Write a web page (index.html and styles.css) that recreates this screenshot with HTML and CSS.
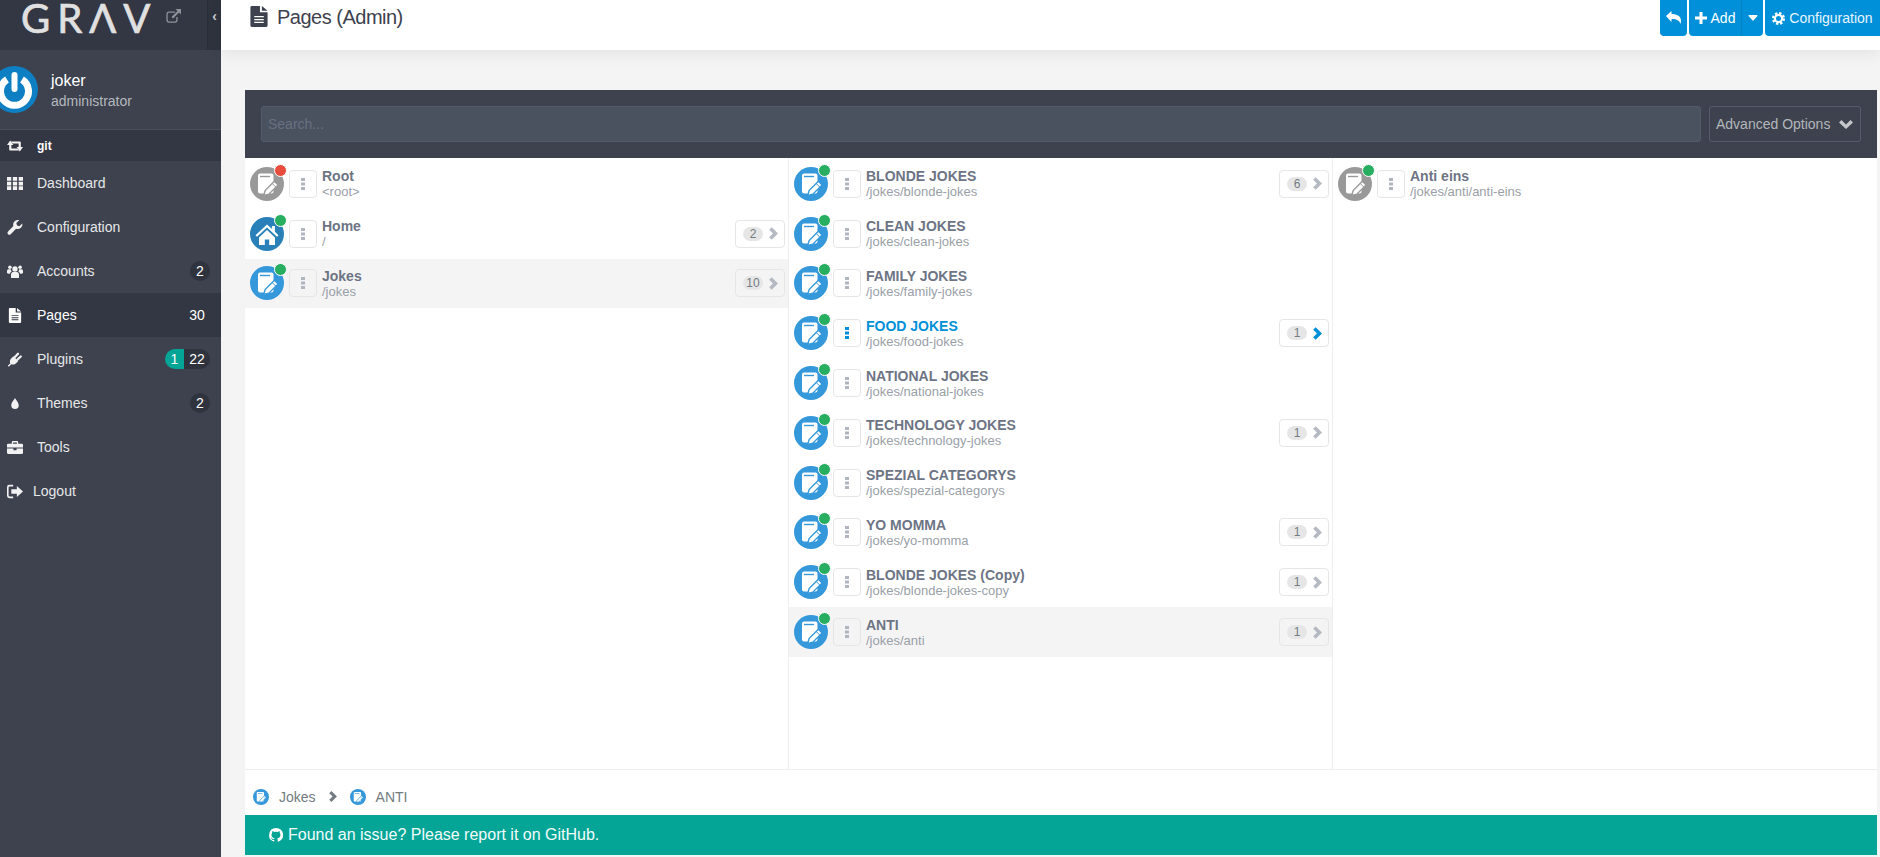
FILE: index.html
```html
<!DOCTYPE html>
<html lang="en">
<head>
<meta charset="utf-8">
<title>Pages (Admin)</title>
<link rel="stylesheet" href="styles.css">
</head>
<body>
<svg class="sprite" aria-hidden="true">
  <symbol id="note" viewBox="0 0 34 34">
    <rect x="8" y="6.500" width="15.500" height="20" rx="2" fill="#fff"/>
    <path d="M10 9.500h10" stroke="currentColor" stroke-width="1.400" fill="none"/>
    <path d="M13.800 28.400l1.300-4.800 9.300-9.300 3.700 3.700-9.300 9.200z" fill="#fff" stroke="currentColor" stroke-width="1.400"/>
    <path d="M22.300 16.600l3.600 3.600" stroke="currentColor" stroke-width="1" fill="none"/>
  </symbol>
  <symbol id="house" viewBox="0 0 34 34">
    <path d="M17 7.500L5.500 18.200l1.500 1.500 10-9.200 10 9.200 1.500-1.500-3.600-3.400V9h-3v3z" fill="#fff"/>
    <path d="M9 20.500L17 13l8 7.500V28h-5.800v-5.500h-4.400V28H9z" fill="#fff"/>
  </symbol>
  <symbol id="dots" viewBox="0 0 4 12">
    <rect width="4" height="3"/><rect y="4.500" width="4" height="3"/><rect y="9" width="4" height="3"/>
  </symbol>
  <symbol id="chev" viewBox="0 0 10 14">
    <path d="M3 0l7 7-7 7-2.800-2.800L4.400 7 .2 2.800z"/>
  </symbol>
  <symbol id="filetext" viewBox="0 0 18 22">
    <path d="M0 1.500A1.500 1.500 0 0 1 1.500 0H10v6.500h8v14a1.500 1.500 0 0 1-1.500 1.500h-15A1.500 1.500 0 0 1 0 20.500z"/>
    <path d="M12 0l6 5h-6z"/>
    <path d="M4 10.500h10v1.400H4zm0 3h10v1.400H4zm0 3h10v1.400H4z" fill="#fff"/>
  </symbol>
  <symbol id="filetext2" viewBox="0 0 18 22">
    <path d="M0 1.500A1.500 1.500 0 0 1 1.500 0H10v6.500h8v14a1.500 1.500 0 0 1-1.500 1.500h-15A1.500 1.500 0 0 1 0 20.500z" fill="#fff"/>
    <path d="M12 0l6 5h-6z" fill="#fff"/>
    <path d="M4 10.500h10v1.400H4zm0 3h10v1.400H4zm0 3h10v1.400H4z" fill="#333743"/>
  </symbol>
  <symbol id="retweet" viewBox="0 0 16 12">
    <path d="M0 5L3.200 .5 6.400 5H4.400v3.500h6l1.800 2H3.200a1 1 0 0 1-1-1V5z"/>
    <path d="M16 7L12.800 11.500 9.600 7h2V3.500h-6l-1.800-2h9a1 1 0 0 1 1 1V7z"/>
  </symbol>
  <symbol id="grid" viewBox="0 0 15 12">
    <path d="M0 0h4v3.500H0zm5.500 0h4v3.500h-4zm5.500 0h4v3.500h-4zM0 4.300h4v3.500H0zm5.500 0h4v3.500h-4zm5.500 0h4v3.500h-4zM0 8.500h4V12H0zm5.500 0h4V12h-4zm5.500 0h4V12h-4z"/>
  </symbol>
  <symbol id="wrench" viewBox="0 0 14 14">
    <path d="M13.800 3.200l-2.700 2.600-2.200-.7-.7-2.200L10.900.2C9.300-.3 7.500.1 6.400 1.300 5.200 2.500 5 4.200 5.500 5.700L.5 10.700c-.7.700-.7 1.800 0 2.500s1.800.7 2.500 0l5-5c1.600.6 3.300.3 4.500-.9 1.200-1.200 1.600-2.900 1.300-4.100z"/>
  </symbol>
  <symbol id="users" viewBox="0 0 16 13">
    <circle cx="8" cy="4" r="2.700"/><circle cx="2.900" cy="2.300" r="1.800"/><circle cx="13.100" cy="2.300" r="1.800"/>
    <path d="M4 12.500V9.500C4 8 5 7 6 7h4c1 0 2 1 2 2.500v3a.5.5 0 0 1-.5.5h-7a.5.5 0 0 1-.5-.5z"/>
    <path d="M0 8V6c0-1 .7-1.700 1.500-1.700h2.300c0 1 .4 1.700 1 2.300C3.800 7 3.200 7.700 3 8.800 1.500 8.800 0 8.500 0 8zM16 8V6c0-1-.7-1.700-1.500-1.700h-2.300c0 1-.4 1.700-1 2.300 1 .4 1.600 1.100 1.800 2.200 1.500 0 3-.3 3-.8z"/>
  </symbol>
  <symbol id="plug" viewBox="0 0 15 15">
    <path d="M.3 13.700L2.800 11.200C2 9.500 2.400 7.700 3.700 6.400L5.900 4.200 10.800 9.100 8.600 11.300C7.300 12.600 5.300 13 3.800 12.200L1.300 14.700z"/>
    <path d="M7.500 5L10.500 1.800M10 7.500L13.300 4.500" stroke="currentColor" stroke-width="2.300" stroke-linecap="round" fill="none"/>
  </symbol>
  <symbol id="drop" viewBox="-2.500 -2 15 18">
    <path d="M5 0c.4 2 4.500 5.500 4.500 9A4.500 4.500 0 0 1 .5 9C.5 5.500 4.600 2 5 0z"/>
  </symbol>
  <symbol id="case" viewBox="0 0 15 12">
    <path d="M4.500 2.500V1a1 1 0 0 1 1-1h4a1 1 0 0 1 1 1v1.500H14a1 1 0 0 1 1 1V6H0V3.500a1 1 0 0 1 1-1zM5.700 2.500h3.600V1.200H5.700z"/>
    <path d="M0 7h6v1.500h3V7h6v4a1 1 0 0 1-1 1H1a1 1 0 0 1-1-1z"/>
  </symbol>
  <symbol id="signout" viewBox="0 0 13 11">
    <path d="M5 0v1.500H2a.8.8 0 0 0-.7.7v6.600c0 .4.3.7.7.7h3V11H2a2 2 0 0 1-2-2V2a2 2 0 0 1 2-2z"/>
    <path d="M8 1l5 4.500L8 10V7.300H3.500V3.700H8z"/>
  </symbol>
  <symbol id="extlink" viewBox="0 0 15 14">
    <path d="M3 2.500h6v1.300H3a1.300 1.300 0 0 0-1.300 1.300v6A1.300 1.300 0 0 0 3 12.400h6a1.300 1.300 0 0 0 1.300-1.300V8h1.300v3.100A2.600 2.600 0 0 1 9 13.700H3a2.600 2.600 0 0 1-2.600-2.600v-6A2.600 2.600 0 0 1 3 2.500z"/>
    <path d="M9.500 0H15v5.500l-2-2-6 6-1.500-1.500 6-6z"/>
  </symbol>
  <symbol id="reply" viewBox="0 0 15 13">
    <path d="M0 5L5.500 0v3C11 3 15 5 15 10c0 1-.2 2-.6 3-.6-3-3-5-8.900-5v3z"/>
  </symbol>
  <symbol id="plus" viewBox="0 0 12 12">
    <path d="M4.500 0h3v4.500H12v3H7.500V12h-3V7.500H0v-3h4.500z"/>
  </symbol>
  <symbol id="caret" viewBox="0 0 10 6">
    <path d="M1 0h8a.6.6 0 0 1 .4 1L5.400 5.500a.6.6 0 0 1-.8 0L.6 1A.6.6 0 0 1 1 0z"/>
  </symbol>
  <symbol id="cog" viewBox="0 0 14 14">
    <circle cx="7" cy="7" r="3.900" fill="none" stroke="currentColor" stroke-width="2.400"/>
    <circle cx="7" cy="7" r="5.800" fill="none" stroke="currentColor" stroke-width="2.400" stroke-dasharray="2.550 2.000"/>
  </symbol>
  <symbol id="chevdown" viewBox="0 0 14 10">
    <path d="M0 3.500L2.500 1 7 5.500 11.500 1 14 3.500 7 10z"/>
  </symbol>
  <symbol id="github" viewBox="0 0 14 14">
    <path d="M7 0a7 7 0 0 0-2.200 13.600c.3.100.5-.1.500-.3v-1.300c-1.900.4-2.300-.8-2.300-.8-.3-.8-.8-1-.8-1-.6-.4 0-.4 0-.4.700 0 1 .7 1 .7.600 1 1.600.7 2 .6 0-.4.200-.7.400-.9-1.500-.2-3.100-.8-3.100-3.400 0-.7.300-1.300.7-1.800-.1-.2-.3-.9.100-1.800 0 0 .6-.2 1.900.7a6.500 6.500 0 0 1 3.500 0c1.300-.9 1.900-.7 1.900-.7.400.9.100 1.600.1 1.800.4.500.7 1.100.7 1.800 0 2.700-1.600 3.200-3.200 3.400.3.200.5.600.5 1.300v1.900c0 .2.100.4.500.3A7 7 0 0 0 7 0z"/>
  </symbol>
</svg>

<aside class="sidebar">
  <div class="brand">
    <span class="logo">GRΛV</span>
    <svg class="ext"><use href="#extlink"/></svg>
    <span class="collapse">‹</span>
  </div>
  <div class="user">
    <svg class="avatar" viewBox="0 0 47 47">
      <circle cx="23.500" cy="23.500" r="23.500" fill="#0e7fc2"/>
      <path d="M16 13.500a14 14 0 1 0 15 0" fill="none" stroke="#fff" stroke-width="7"/>
      <path d="M23.500 9v14" stroke="#fff" stroke-width="6" stroke-linecap="round"/>
    </svg>
    <div class="user-text">
      <div class="user-name">joker</div>
      <div class="user-role">administrator</div>
    </div>
  </div>
  <div class="git"><svg class="nav-icon"><use href="#retweet"/></svg><span>git</span></div>
  <nav class="nav">
    <a class="nav-item"><svg class="nav-icon"><use href="#grid"/></svg><span>Dashboard</span></a>
    <a class="nav-item"><svg class="nav-icon"><use href="#wrench"/></svg><span>Configuration</span></a>
    <a class="nav-item"><svg class="nav-icon"><use href="#users"/></svg><span>Accounts</span><b class="badge">2</b></a>
    <a class="nav-item active"><svg class="nav-icon"><use href="#filetext2"/></svg><span>Pages</span><b class="badge">30</b></a>
    <a class="nav-item"><svg class="nav-icon plug"><use href="#plug"/></svg><span>Plugins</span><b class="badge split"><i class="teal">1</i><i class="rest">22</i></b></a>
    <a class="nav-item"><svg class="nav-icon"><use href="#drop"/></svg><span>Themes</span><b class="badge">2</b></a>
    <a class="nav-item"><svg class="nav-icon"><use href="#case"/></svg><span>Tools</span></a>
    <a class="nav-item logout"><svg class="nav-icon"><use href="#signout"/></svg><span>Logout</span></a>
  </nav>
</aside>

<main class="main">
  <header class="topbar">
    <h1 class="title"><svg class="title-icon"><use href="#filetext"/></svg>Pages (Admin)</h1>
    <div class="actions">
      <a class="btn btn-back"><svg class="i-reply"><use href="#reply"/></svg></a>
      <div class="btn-group">
        <a class="btn btn-add"><svg class="i-plus"><use href="#plus"/></svg>Add</a>
        <a class="btn btn-caret"><svg class="i-caret"><use href="#caret"/></svg></a>
      </div>
      <a class="btn btn-config"><svg class="i-cog"><use href="#cog"/></svg>Configuration</a>
    </div>
  </header>
  <section class="content">
    <div class="panel">
      <div class="filters">
        <input class="search" type="text" placeholder="Search...">
        <div class="advanced">Advanced Options<svg class="i-chevdown"><use href="#chevdown"/></svg></div>
      </div>
      <div class="columns">
        <div class="col">
          <div class="row"><span class="pic gray"><svg><use href="#note"/></svg><i class="dot red"></i></span><span class="kebab"><svg><use href="#dots"/></svg></span><div class="info"><div class="name cap">Root</div><div class="path">&lt;root&gt;</div></div></div>
          <div class="row"><span class="pic dark"><svg><use href="#house"/></svg><i class="dot"></i></span><span class="kebab"><svg><use href="#dots"/></svg></span><div class="info"><div class="name cap">Home</div><div class="path">/</div></div><span class="count"><em>2</em><svg><use href="#chev"/></svg></span></div>
          <div class="row selected"><span class="pic"><svg><use href="#note"/></svg><i class="dot"></i></span><span class="kebab"><svg><use href="#dots"/></svg></span><div class="info"><div class="name cap">Jokes</div><div class="path">/jokes</div></div><span class="count"><em>10</em><svg><use href="#chev"/></svg></span></div>
        </div>
        <div class="col">
          <div class="row"><span class="pic"><svg><use href="#note"/></svg><i class="dot"></i></span><span class="kebab"><svg><use href="#dots"/></svg></span><div class="info"><div class="name">BLONDE JOKES</div><div class="path">/jokes/blonde-jokes</div></div><span class="count"><em>6</em><svg><use href="#chev"/></svg></span></div>
          <div class="row"><span class="pic"><svg><use href="#note"/></svg><i class="dot"></i></span><span class="kebab"><svg><use href="#dots"/></svg></span><div class="info"><div class="name">CLEAN JOKES</div><div class="path">/jokes/clean-jokes</div></div></div>
          <div class="row"><span class="pic"><svg><use href="#note"/></svg><i class="dot"></i></span><span class="kebab"><svg><use href="#dots"/></svg></span><div class="info"><div class="name">FAMILY JOKES</div><div class="path">/jokes/family-jokes</div></div></div>
          <div class="row hover"><span class="pic"><svg><use href="#note"/></svg><i class="dot"></i></span><span class="kebab"><svg><use href="#dots"/></svg></span><div class="info"><div class="name">FOOD JOKES</div><div class="path">/jokes/food-jokes</div></div><span class="count"><em>1</em><svg><use href="#chev"/></svg></span></div>
          <div class="row"><span class="pic"><svg><use href="#note"/></svg><i class="dot"></i></span><span class="kebab"><svg><use href="#dots"/></svg></span><div class="info"><div class="name">NATIONAL JOKES</div><div class="path">/jokes/national-jokes</div></div></div>
          <div class="row"><span class="pic"><svg><use href="#note"/></svg><i class="dot"></i></span><span class="kebab"><svg><use href="#dots"/></svg></span><div class="info"><div class="name">TECHNOLOGY JOKES</div><div class="path">/jokes/technology-jokes</div></div><span class="count"><em>1</em><svg><use href="#chev"/></svg></span></div>
          <div class="row"><span class="pic"><svg><use href="#note"/></svg><i class="dot"></i></span><span class="kebab"><svg><use href="#dots"/></svg></span><div class="info"><div class="name">SPEZIAL CATEGORYS</div><div class="path">/jokes/spezial-categorys</div></div></div>
          <div class="row"><span class="pic"><svg><use href="#note"/></svg><i class="dot"></i></span><span class="kebab"><svg><use href="#dots"/></svg></span><div class="info"><div class="name">YO MOMMA</div><div class="path">/jokes/yo-momma</div></div><span class="count"><em>1</em><svg><use href="#chev"/></svg></span></div>
          <div class="row"><span class="pic"><svg><use href="#note"/></svg><i class="dot"></i></span><span class="kebab"><svg><use href="#dots"/></svg></span><div class="info"><div class="name">BLONDE JOKES (Copy)</div><div class="path">/jokes/blonde-jokes-copy</div></div><span class="count"><em>1</em><svg><use href="#chev"/></svg></span></div>
          <div class="row selected"><span class="pic"><svg><use href="#note"/></svg><i class="dot"></i></span><span class="kebab"><svg><use href="#dots"/></svg></span><div class="info"><div class="name">ANTI</div><div class="path">/jokes/anti</div></div><span class="count"><em>1</em><svg><use href="#chev"/></svg></span></div>
        </div>
        <div class="col">
          <div class="row"><span class="pic gray"><svg><use href="#note"/></svg><i class="dot"></i></span><span class="kebab"><svg><use href="#dots"/></svg></span><div class="info"><div class="name cap">Anti eins</div><div class="path">/jokes/anti/anti-eins</div></div></div>
        </div>
      </div>
      <div class="crumbs">
        <span class="mini"><svg><use href="#note"/></svg></span><span class="crumb">Jokes</span>
        <svg class="crumb-chev"><use href="#chev"/></svg>
        <span class="mini"><svg><use href="#note"/></svg></span><span class="crumb">ANTI</span>
      </div>
      <div class="notice"><svg class="i-github"><use href="#github"/></svg>Found an issue? Please report it on GitHub.</div>
    </div>
  </section>
</main>
</body>
</html>
```

FILE: styles.css
```css
* { box-sizing: border-box; }
html, body { margin: 0; height: 100%; }
body {
  display: flex;
  width: 1880px;
  height: 857px;
  overflow: hidden;
  background: #f4f4f4;
  font-family: "Liberation Sans", Arial, sans-serif;
  font-size: 14px;
  color: #737c81;
}
.sprite { width: 0; height: 0; position: absolute; }

/* sidebar */
.sidebar { width: 221px; flex: none; background: #3d424e; color: #fff; }
.brand {
  height: 50px;
  background: #333743;
  display: flex;
  align-items: flex-start;
  padding-left: 21px;
}
.logo {
  font-family: "Lato", "Open Sans", sans-serif;
  font-size: 40px;
  line-height: 36px;
  letter-spacing: 7px;
  color: #e0e0e0;
  -webkit-text-stroke: .7px #e0e0e0;
  width: 145px;
  flex: none;
  white-space: nowrap;
}
.ext { width: 15px; height: 14px; margin: 9px 0 0 0; fill: #8e929a; flex: none; }
.collapse {
  margin-left: 26px;
  width: 14px;
  height: 50px;
  flex: none;
  background: #2f333e;
  border-left: 1px solid #2b2e38;
  color: #c9ccd1;
  font-size: 14px;
  font-weight: bold;
  line-height: 32px;
  text-align: center;
}
.user {
  height: 80px;
  display: flex;
  align-items: center;
  border-bottom: 1px solid #4a4f5b;
  overflow: hidden;
}
.avatar { width: 47px; height: 47px; margin-left: -9px; flex: none; }
.user-text { margin: 3px 0 0 13px; }
.user-name { font-size: 16px; line-height: 20px; }
.user-role { font-size: 14px; line-height: 20px; color: #b5b8be; }
.git {
  height: 31px;
  background: #333743;
  display: flex;
  align-items: center;
  padding-left: 7px;
  font-size: 12px;
  font-weight: bold;
}
.git .nav-icon { margin-right: 14px; height: 12px; }
.nav { display: flex; flex-direction: column; }
.nav-item {
  height: 44px;
  display: flex;
  align-items: center;
  padding: 0 11px 0 7px;
  color: #e6e7e9;
}
.nav-item.active { background: #333743; color: #fff; }
.nav-icon { width: 16px; height: 15px; margin-right: 14px; fill: #f2f2f2; flex: none; }
.plug { color: #f2f2f2; }
.logout .nav-icon { margin-right: 10px; }
.badge {
  margin-left: auto;
  min-width: 20px;
  height: 20px;
  border-radius: 10px;
  background: #2f333e;
  color: #fff;
  font-weight: normal;
  line-height: 20px;
  text-align: center;
}
.active .badge { background: transparent; margin-right: 3px; }
.badge.split { display: flex; background: transparent; }
.badge i { font-style: normal; display: block; height: 20px; }
.teal { width: 19px; background: #04a596; border-radius: 10px 0 0 10px; }
.rest { width: 26px; background: #2f333e; border-radius: 0 10px 10px 0; }

/* main */
.main { flex: 1; min-width: 0; display: flex; flex-direction: column; }
.topbar {
  height: 50px;
  flex: none;
  background: #fff;
  box-shadow: 0 4px 16px rgba(0, 0, 0, .07);
  display: flex;
  align-items: flex-start;
  justify-content: space-between;
  padding-left: 29px;
  position: relative;
}
.title {
  margin: 0;
  font-size: 20px;
  font-weight: normal;
  line-height: 34px;
  color: #3d424e;
  display: flex;
  align-items: center;
  letter-spacing: -.5px;
}
.title-icon { width: 18px; height: 21px; margin: -1px 9px 0 0; fill: #3d424e; }
.actions { display: flex; gap: 2px; }
.btn {
  height: 36px;
  background: #0090d9;
  color: #fff;
  fill: #fff;
  display: flex;
  align-items: center;
  justify-content: center;
  border-radius: 0 0 4px 4px;
  font-size: 14px;
}
.btn-back { width: 27px; }
.btn-group { display: flex; }
.btn-add { width: 53px; border-radius: 0 0 0 4px; border-right: 1px solid #0a82c2; }
.btn-caret { width: 21px; border-radius: 0 0 4px 0; }
.btn-config { width: 115px; border-radius: 0 0 0 4px; color: #e8f5fc; }
.i-reply { width: 15px; height: 13px; margin-top: -2px; }
.i-plus { width: 12px; height: 12px; margin-right: 4px; }
.i-caret { width: 10px; height: 6px; }
.i-cog { width: 13px; height: 13px; margin-right: 4px; color: #fff; }
.content { flex: 1; padding: 40px 3px 2px 24px; min-height: 0; }
.panel { height: 100%; background: #fff; display: flex; flex-direction: column; }
.filters {
  height: 68px;
  flex: none;
  background: #3d424e;
  display: flex;
  align-items: center;
  padding: 0 16px;
  gap: 8px;
}
.search {
  flex: 1;
  height: 36px;
  background: #4a5260;
  border: 1px solid #545c6b;
  border-radius: 3px;
  padding: 0 6px;
  font: 14px "Liberation Sans", Arial, sans-serif;
  color: #fff;
  outline: 0;
}
.search::placeholder { color: #687080; opacity: 1; }
.advanced {
  width: 152px;
  height: 36px;
  border: 1px solid #545c6b;
  border-radius: 3px;
  color: #b3b6bb;
  display: flex;
  align-items: center;
  padding-left: 6px;
  justify-content: space-between;
  padding-right: 7px;
}
.i-chevdown { width: 14px; height: 10px; fill: #c4c6ca; }
.columns { flex: 1; display: flex; min-height: 0; }
.col { width: 544px; flex: none; padding-top: 1px; border-right: 1px solid #eeeeee; }
.col:last-child { border-right: 0; }
.row {
  height: 49.800px;
  display: flex;
  align-items: center;
  padding: 0 3px 0 5px;
}
.row.selected { background: #f4f4f4; }
.pic {
  width: 34px;
  height: 34px;
  flex: none;
  border-radius: 50%;
  background: #3498db;
  color: #3498db;
  position: relative;
}
.pic svg { width: 34px; height: 34px; display: block; }
.pic.gray { background: #999; color: #999; }
.pic.dark { background: #2980b9; color: #2980b9; }
.dot {
  position: absolute;
  top: -3px;
  right: -3px;
  width: 11px;
  height: 11px;
  border-radius: 50%;
  background: #27ae60;
  border: 1px solid #fff;
  box-sizing: content-box;
}
.dot.red { background: #e74c3c; }
.kebab {
  width: 28px;
  height: 28px;
  flex: none;
  margin-left: 5px;
  border: 1px solid #e6e6e6;
  border-radius: 4px;
  display: flex;
  align-items: center;
  justify-content: center;
  fill: #b0b5bf;
}
.kebab svg { width: 4px; height: 12px; }
.info { margin-left: 5px; flex: 1; min-width: 0; }
.name { font-size: 14px; font-weight: bold; line-height: 16px; color: #6d7484; }
.path { font-size: 13px; line-height: 15px; color: #9a9fa8; }
.count {
  width: 50px;
  height: 28px;
  flex: none;
  border: 1px solid #e6e6e6;
  border-radius: 4px;
  display: flex;
  align-items: center;
  padding-left: 7px;
  fill: #b5bac2;
}
.count em {
  width: 20px;
  height: 14px;
  border-radius: 7px;
  background: #e6e6e6;
  font-style: normal;
  font-size: 12px;
  line-height: 14px;
  text-align: center;
  color: #737c81;
}
.count svg { width: 9px; height: 13px; margin-left: 6px; }
.hover .name { color: #0090d9; }
.hover .kebab { fill: #0090d9; }
.hover .count { fill: #0090d9; }
.crumbs {
  height: 46px;
  flex: none;
  border-top: 1px solid #eeeeee;
  display: flex;
  align-items: center;
  padding: 8px 0 0 8px;
  color: #737c81;
}
.mini {
  width: 16px;
  height: 16px;
  border-radius: 50%;
  background: #3498db;
  color: #3498db;
  flex: none;
}
.mini svg { width: 16px; height: 16px; display: block; }
.crumb { margin-left: 10px; }
.crumb-chev { width: 8px; height: 11px; margin: 0 13px 0 13px; fill: #737c81; }
.notice {
  height: 40px;
  flex: none;
  background: #04a596;
  color: #f2fbfa;
  display: flex;
  align-items: center;
  padding-left: 24px;
  font-size: 16px;
}
.i-github { width: 14px; height: 14px; margin-right: 5px; fill: #fff; }
```
